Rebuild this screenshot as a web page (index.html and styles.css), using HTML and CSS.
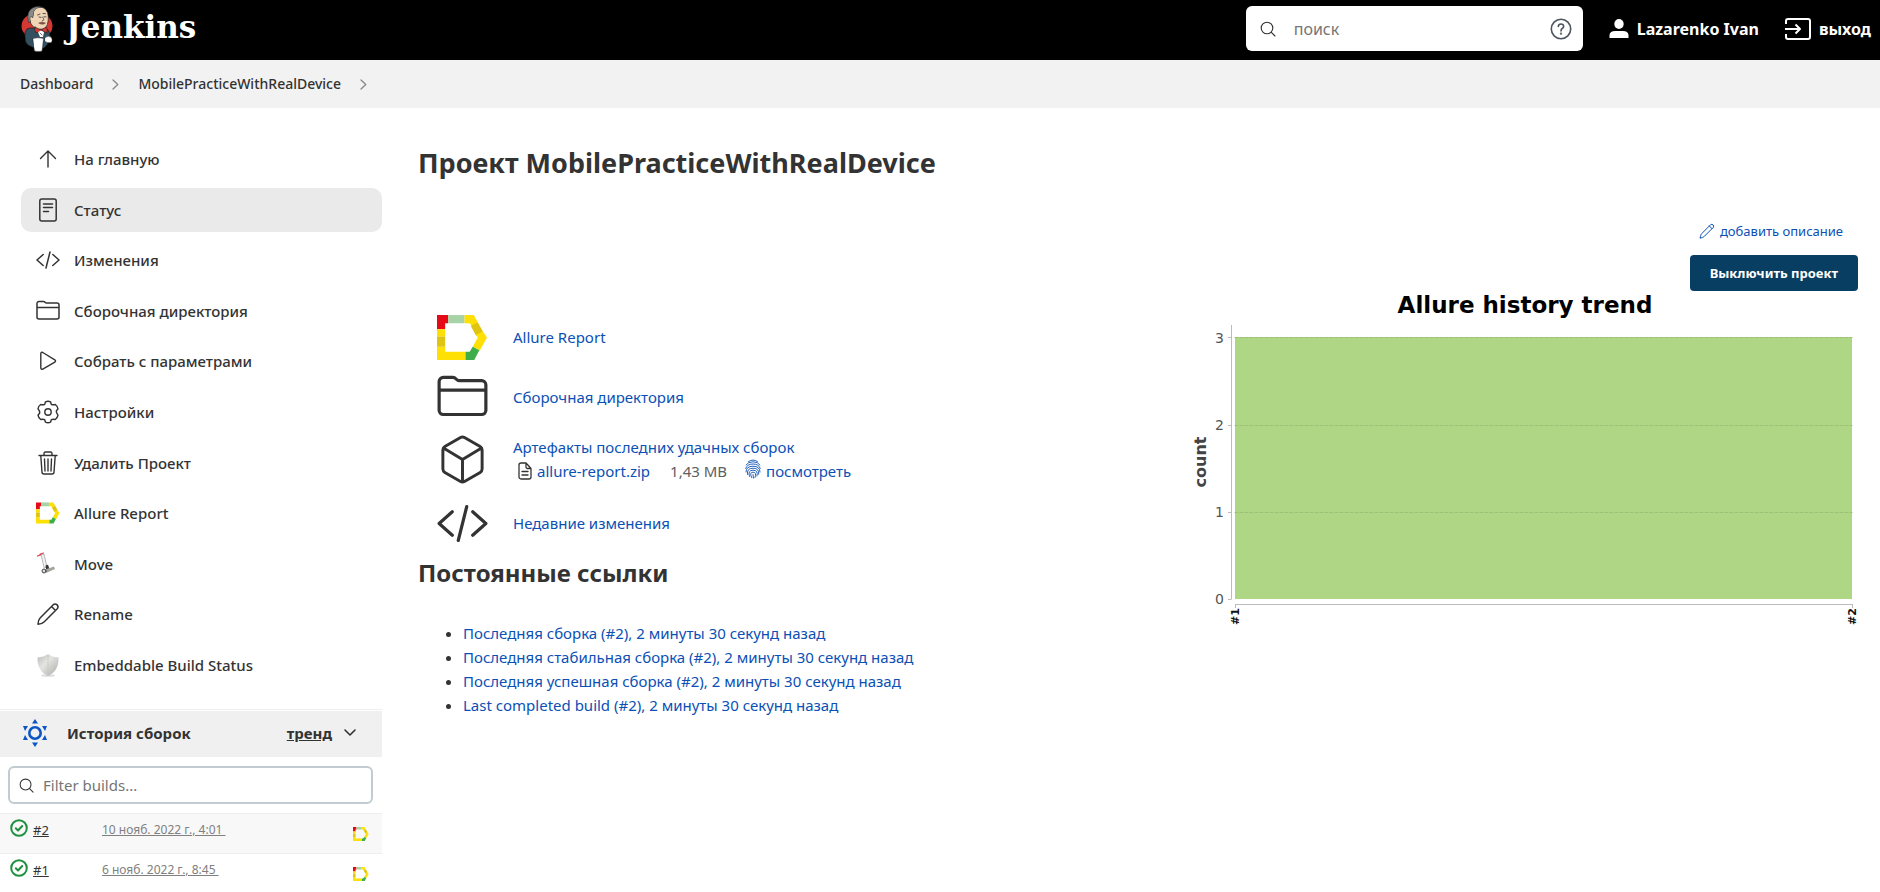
FILE: index.html
```html
<!DOCTYPE html>
<html lang="ru">
<head>
<meta charset="utf-8">
<title>MobilePracticeWithRealDevice [Jenkins]</title>
<link rel="stylesheet" href="styles.css">
</head>
<body>
<svg class="defs" aria-hidden="true">
  <defs>
    <symbol id="i-search" viewBox="0 0 24 24" stroke-width="1.7"><circle cx="10.500" cy="10.500" r="8.700"/><path d="M17 17L22.500 22.500"/></symbol>
    <symbol id="i-next" viewBox="0 0 7 11" stroke-width="1.3"><path d="M1 1l4.800 4.500L1 10"/></symbol>
    <symbol id="i-up" viewBox="0 0 24 24" stroke-width="1.400"><path d="M12 20V4.500M4.500 11.500L12 4l7.500 7.500"/></symbol>
    <symbol id="i-status" viewBox="0 0 24 24" stroke-width="1.500"><rect x="3.800" y="1" width="16.400" height="22" rx="2"/><path d="M7.500 6h9M7.500 9.500h9M7.500 13.500h5"/></symbol>
    <symbol id="i-code" viewBox="0 0 24 24" stroke-width="1.500"><path d="M7.200 6.500L1 12l6.200 5.500M16.800 6.500L23 12l-6.200 5.500M14 4l-4 16"/></symbol>
    <symbol id="i-folder" viewBox="0 0 24 24" stroke-width="1.500"><path d="M1 18V4.500a2 2 0 0 1 2-2h4.500c1.500 0 1.500 1.600 3 1.600H21a2 2 0 0 1 2 2V18a2 2 0 0 1-2 2H3a2 2 0 0 1-2-2zM1 8.500h22"/></symbol>
    <symbol id="i-play" viewBox="0 0 24 24" stroke-width="1.400"><path d="M4.800 4.600v14.400c0 1.200 1 1.600 2 1.100l12-7c1-.6 1-1.600 0-2.200l-12-7.400C5.800 3 4.800 3.400 4.800 4.600z"/></symbol>
    <symbol id="i-gear" viewBox="0 0 24 24" stroke-width="1.400"><circle cx="12" cy="12" r="3.200"/><path d="M9.500 1.800Q12 .6 14.500 1.800L15.300 4.300Q17 5.200 19.300 4.500Q21.700 6.300 22 8.800L20.300 11Q20.100 12.800 22 15.200Q21.500 18 19.300 19.500Q17 18.800 15.300 19.700L14.500 22.200Q12 23.400 9.500 22.200L8.700 19.700Q7 18.800 4.700 19.500Q2.400 17.800 2 15.200L3.700 13Q3.900 11.200 2 8.800Q2.400 6 4.700 4.500Q7 5.200 8.700 4.300Z"/></symbol>
    <symbol id="i-trash" viewBox="0 0 24 24" stroke-width="1.400"><path d="M3 4.500h18M8 4V2.500A1.500 1.500 0 0 1 9.500 1h5A1.500 1.500 0 0 1 16 2.500V4M4.800 5l1.200 16a2 2 0 0 0 2 2h8a2 2 0 0 0 2-2l1.200-16M8.500 8l.5 12M12 8v12M15.500 8L15 20"/></symbol>
    <symbol id="i-pencil" viewBox="0 0 24 24" stroke-width="1.500"><path d="M2 22.300c0-3 1-5.300 2.300-6.600L17.500 2.500a2.900 2.900 0 0 1 4 4L8.300 19.700C7 21 4.500 22.300 2 22.300zM15.500 4.500l4 4"/></symbol>
    <symbol id="i-cube" viewBox="-2 -2 52 52" stroke-width="3"><path d="M26 1.600l16 9.200q2 1.200 2 3.400v19.600q0 2.200-2 3.400l-16 9.200q-2 1.100-4 0L6 37.200q-2-1.200-2-3.400V14.200q0-2.200 2-3.400l16-9.200q2-1.100 4 0zM5 12.500L24 24l19-11.500M24 24v22"/></symbol>
    <symbol id="i-doc" viewBox="0 0 14 18" stroke-width="1.300"><path d="M3 1h5l5 5.500V15a2 2 0 0 1-2 2H3a2 2 0 0 1-2-2V3a2 2 0 0 1 2-2zM8 1v4a1.500 1.500 0 0 0 1.500 1.500H13M4 9.500h6M4 13h6"/></symbol>
    <symbol id="i-finger" viewBox="0 0 16 20" stroke-width=".9"><path d="M3.500 2.500Q8-.5 12.500 2.500M1 6Q3 2.800 8 2.800T15 6M.7 9.500Q2 5 8 5t7.300 4.500M1 13Q1 7.200 8 7.200T15 13M2.500 15.500Q1.500 9.200 8 9.200t5.700 6M4.500 17.500Q2.500 11.200 8 11.200T12 17M6.800 18.800Q4 13.200 8 13.200t2 5.300M8 15.500l.5 3.500"/></symbol>
    <symbol id="i-allure" viewBox="0 -3 50 50"><path fill="#e60a17" d="M0 0h11v8H8v6H0z"/><path fill="#a7d3a6" d="M11 0h16v8H11z"/><path fill="#ffe004" d="M27 0h9l4 7-6 3.500L32 8h-5zM0 14h8v7H0zM0 31h8v5h20v8H0zM44 15l5 7-7 12.800-7-3.800 5-9-3-4z"/><path fill="#e0c510" d="M0 21h8v10H0zM40 7l5 9-7 3.500-5-9z"/><path fill="#3dae49" d="M35 31l6.500 3.500L36.500 44H28v-8h4z"/></symbol>
    <symbol id="i-ok" viewBox="0 0 18 18"><circle cx="9" cy="9" r="7.800"/><path d="M5.800 9.300l2.200 2.200L12.200 7"/></symbol>
  </defs>
</svg>

<header class="header">
  <a class="brand" href="#" aria-label="Jenkins">
    <svg class="mascot" viewBox="0 0 32 46">
      <ellipse cx="16" cy="20" rx="15.500" ry="13" fill="#d33833"/>
      <path d="M6 23q-3 3-2 8 0 6 3 8l6 3h10l3-3q3-4 3-10-1-6-5-7H10z" fill="#335061" stroke="#111" stroke-width=".6"/>
      <path d="M8 11Q8 1 18 .8q9 .6 9.300 10.200Q27.500 20 23 23q-6 1-9-1-5-3-6-11z" fill="#f0d6b7" stroke="#222" stroke-width=".7"/>
      <path d="M7.500 16Q5 5 12 1.800 16-.5 21 1 14 1.500 12.500 6q.5 3-1 6l-1-1.500q-2.500 0-1 5z" fill="#8a8a8a" stroke="#222" stroke-width=".5"/>
      <path d="M16.500 9l2.500-1M22 7.500l2.500.2M18 11l2 .4M23 10.800l2 .1M21.500 11q3 3.500-.3 4" fill="none" stroke="#333" stroke-width=".8"/>
      <path d="M17 17q4-2 8 0-3 3-8 0z" fill="#7d5244"/>
      <path d="M14 21l6 3 5-3q2 2 1 6l-5-2.500-6 2.500q-2-3-1-6z" fill="#d33833" stroke="#111" stroke-width=".5"/>
      <path d="M17 26l3-1.500 3 1.500-1 5h-3z" fill="#fff"/><path d="M19 27l2 2" stroke="#333" stroke-width=".7"/>
      <path d="M12 32.500q5-1.500 10.500 0L21 45q-4 1-7.500 0z" fill="#fff" stroke="#222" stroke-width=".4"/>
      <path d="M24 31.500q4-2.500 6.500 0 1.500 3 0 5-4 1-6.500-1z" fill="#fff" stroke="#222" stroke-width=".5"/>
    </svg>
    <span class="brand-name">Jenkins</span>
  </a>
  <form class="search" role="search">
    <svg class="search-icon"><use href="#i-search"/></svg>
    <input class="search-input" type="search" placeholder="поиск" aria-label="поиск">
    <a class="help" href="#" aria-label="Справка"><svg class="help-icon" viewBox="0 0 22 22" stroke-width="1.600"><circle cx="11" cy="11" r="9.700"/><path d="M8.300 8.500Q8.500 6 11 6t2.700 2.300q0 1.400-1.500 2.200Q11 11.200 11 13"/><circle cx="11" cy="15.600" r=".4"/></svg></a>
  </form>
  <nav class="account">
    <a class="account-link" href="#"><svg class="user-icon" viewBox="0 0 20 20"><ellipse cx="10" cy="5" rx="4.700" ry="5"/><path d="M.5 19v-3Q1 12 6 12h8q5 0 5.500 4v3z"/></svg>Lazarenko Ivan</a>
    <a class="account-link" href="#"><svg class="exit-icon" viewBox="0 0 26 22"><path d="M1 6V3q0-2 2-2h20q2 0 2 2v16q0 2-2 2H3q-2 0-2-2v-3M0 11h14M10.500 6.500L15 11l-4.500 4.500"/></svg>выход</a>
  </nav>
</header>

<nav class="crumbs" aria-label="breadcrumb">
  <a href="#">Dashboard</a><svg class="crumb-sep"><use href="#i-next"/></svg>
  <a href="#">MobilePracticeWithRealDevice</a><svg class="crumb-sep"><use href="#i-next"/></svg>
</nav>

<div class="page">
  <aside class="side">
    <nav class="tasks">
      <a class="task" href="#"><svg class="icon"><use href="#i-up"/></svg>На главную</a>
      <a class="task task-active" href="#"><svg class="icon"><use href="#i-status"/></svg>Статус</a>
      <a class="task" href="#"><svg class="icon"><use href="#i-code"/></svg>Изменения</a>
      <a class="task" href="#"><svg class="icon"><use href="#i-folder"/></svg>Сборочная директория</a>
      <a class="task" href="#"><svg class="icon"><use href="#i-play"/></svg>Собрать с параметрами</a>
      <a class="task" href="#"><svg class="icon"><use href="#i-gear"/></svg>Настройки</a>
      <a class="task" href="#"><svg class="icon"><use href="#i-trash"/></svg>Удалить Проект</a>
      <a class="task" href="#"><svg class="icon icon-solid"><use href="#i-allure"/></svg>Allure Report</a>
      <a class="task" href="#"><svg class="icon icon-solid" viewBox="0 0 24 24"><path d="M1.500 4l3.500-1.200M4 2.300l3.500-1.200" stroke="#d8333b" stroke-width="1.100"/><path d="M5.500 2.500L8 2l3 13-2.500.8z" fill="#f2f2f2" stroke="#999" stroke-width=".7"/><path d="M8 18l10-3.500 1 2.500-9 4z" fill="#a5a59c"/><path d="M9.500 13.500l2.500-.8 1.200 3.500-3 1z" fill="#333"/><circle cx="8" cy="19" r="2" fill="#ddd" stroke="#444"/></svg>Move</a>
      <a class="task" href="#"><svg class="icon"><use href="#i-pencil"/></svg>Rename</a>
      <a class="task" href="#"><svg class="icon icon-solid" viewBox="0 0 24 24"><defs><linearGradient id="steel" x1="0" x2="1" y1="0" y2="1"><stop offset="0" stop-color="#b9bbb6"/><stop offset=".4" stop-color="#e4e5e2"/><stop offset="1" stop-color="#a9aba6"/></linearGradient></defs><ellipse cx="12" cy="22.500" rx="7" ry="1.300" fill="#ddd"/><path d="M1.500 4.500Q8 4 12 1q4 3 10.500 3.500Q23 18 12 23 1 18 1.500 4.500z" fill="url(#steel)"/><path d="M12 3v18" stroke="#bfc1bc" stroke-dasharray="1 2"/></svg>Embeddable Build Status</a>
    </nav>

    <section class="history">
      <div class="history-head">
        <svg class="sun" viewBox="0 0 24 28"><circle cx="12" cy="14" r="5.700" fill="none" stroke="#0b56c4" stroke-width="2.600"/><path d="M12 0l3 4.500H9zM12 28l3-4.500H9zM0 7h5l-3 5zM24 7h-5l3 5zM0 21h5l-3-5zM24 21h-5l3-5z" fill="#0b56c4"/></svg>
        <h2 class="history-title">История сборок</h2>
        <a class="trend" href="#">тренд</a>
        <svg class="chevron" viewBox="0 0 12 8" stroke-width="1.600"><path d="M1 1l5 5 5-5"/></svg>
      </div>
      <div class="filter">
        <svg class="filter-icon"><use href="#i-search"/></svg>
        <input class="filter-input" type="text" placeholder="Filter builds..." aria-label="Filter builds">
      </div>
      <div class="build build-odd"><svg class="ok"><use href="#i-ok"/></svg><a class="build-num" href="#">#2</a><a class="build-time" href="#">10 нояб. 2022 г., 4:01&nbsp;</a><a class="build-report" href="#" aria-label="Allure Report"><svg class="build-allure"><use href="#i-allure"/></svg></a></div>
      <div class="build"><svg class="ok"><use href="#i-ok"/></svg><a class="build-num" href="#">#1</a><a class="build-time" href="#">6 нояб. 2022 г., 8:45&nbsp;</a><a class="build-report" href="#" aria-label="Allure Report"><svg class="build-allure"><use href="#i-allure"/></svg></a></div>
    </section>
  </aside>

  <main class="main">
    <h1 class="title">Проект MobilePracticeWithRealDevice</h1>
    <div class="columns">
      <div class="content">
        <ul class="summary">
          <li class="row"><svg class="big icon-solid"><use href="#i-allure"/></svg><a href="#">Allure Report</a></li>
          <li class="row"><svg class="big"><use href="#i-folder"/></svg><a href="#">Сборочная директория</a></li>
          <li class="row row-tall"><svg class="big"><use href="#i-cube"/></svg>
            <div class="artifacts"><a href="#">Артефакты последних удачных сборок</a>
              <div class="files"><svg class="doc"><use href="#i-doc"/></svg><a href="#">allure-report.zip</a><span class="size">1,43 MB</span><svg class="finger"><use href="#i-finger"/></svg><a href="#">посмотреть</a></div>
            </div></li>
          <li class="row row-tall"><svg class="big"><use href="#i-code"/></svg><a href="#">Недавние изменения</a></li>
        </ul>
        <h2 class="subtitle">Постоянные ссылки</h2>
        <ul class="permalinks">
          <li><a href="#">Последняя сборка (#2), 2 минуты 30 секунд назад</a></li>
          <li><a href="#">Последняя стабильная сборка (#2), 2 минуты 30 секунд назад</a></li>
          <li><a href="#">Последняя успешная сборка (#2), 2 минуты 30 секунд назад</a></li>
          <li><a href="#">Last completed build (#2), 2 минуты 30 секунд назад</a></li>
        </ul>
      </div>
      <div class="aside">
        <a class="describe" href="#"><svg class="describe-icon"><use href="#i-pencil"/></svg>добавить описание</a>
        <button class="disable" type="button">Выключить проект</button>
        <svg class="chart" viewBox="0 0 680 350" role="img" aria-label="Allure history trend">
          <text class="chart-title" x="347" y="22" text-anchor="middle">Allure history trend</text>
          <path class="area" d="M57 46h617v262H57z"/>
          <path class="grid" d="M57 46.500h617M57 134.500h617M57 221.500h617"/>
          <path class="axis" d="M53.500 34v274.500M50 46.500h3M50 134.500h3M50 221.500h3M50 308.500h3M57 313.500h617.500M57.500 313v4M674.500 313v4"/>
          <g class="ticks" text-anchor="end"><text x="46" y="52">3</text><text x="46" y="139">2</text><text x="46" y="226">1</text><text x="46" y="313">0</text></g>
          <text class="axis-name" transform="translate(28 171) rotate(-90)" text-anchor="middle">count</text>
          <text class="build-tick" transform="translate(61 334) rotate(-90)">#1</text>
          <text class="build-tick" transform="translate(678 334) rotate(-90)">#2</text>
        </svg>
      </div>
    </div>
  </main>
</div>
</body>
</html>
```
FILE: styles.css
```css
* { box-sizing: border-box; }
body { margin: 0; background: #fff; color: #333; font: 15px/24px "Noto Sans", "Open Sans", sans-serif; }
a { color: #0b50b5; text-decoration: none; }
ul { margin: 0; padding: 0; list-style: none; }
h1, h2 { margin: 0; }
svg { flex: none; fill: none; stroke: #333; stroke-linecap: round; stroke-linejoin: round; }
.defs { position: absolute; width: 0; height: 0; }

.header { display: flex; align-items: center; height: 60px; padding: 0 9px 0 21px; background: #000; }
.brand { display: flex; align-items: center; gap: 13px; margin-right: auto; padding-bottom: 3px; color: #fff; }
.mascot { width: 32px; height: 46px; stroke: none; }
.brand-name { padding-bottom: 4px; font: bold 31px/36px "DejaVu Serif", serif; }
.search { display: flex; align-items: center; width: 337px; height: 45px; margin-bottom: 3px; padding: 0 11px 0 14px; border-radius: 6px; background: #fff; }
.search-icon { width: 16px; height: 16px; }
.search-input { flex: 1; min-width: 0; padding: 0 0 0 18px; border: 0; outline: 0; background: none; font: 16px/24px "Noto Sans", sans-serif; }
input::placeholder { color: #757575; opacity: 1; }
.help { display: flex; }
.help-icon { width: 22px; height: 22px; stroke: #4d545d; }
.account { display: flex; gap: 26px; margin: 0 0 3px 26px; }
.account-link { display: flex; align-items: center; gap: 8px; color: #fff; font: bold 16px/24px "Noto Sans", sans-serif; }
.user-icon { width: 20px; height: 20px; fill: #fff; stroke: none; }
.exit-icon { width: 26px; height: 22px; stroke: #fff; stroke-width: 2px; stroke-linecap: butt; }

.crumbs { display: flex; align-items: center; height: 48px; padding: 0 20px; background: #f2f2f2; font-size: 14px; font-weight: 500; }
.crumbs a { color: #333; }
.crumb-sep { width: 7px; height: 11px; margin: 0 19px; stroke: #888; }

.page { display: flex; }
.side { flex: none; width: 382px; }
.tasks { display: flex; flex-direction: column; justify-content: space-between; min-height: 579px; padding: 29px 0 0 21px; }
.task { display: flex; align-items: center; gap: 14px; height: 44px; padding: 0 15px; border-radius: 10px; color: #333; font-weight: 500; }
.task-active { background: #eaeaea; }
.icon { width: 24px; height: 24px; }
.icon-solid { stroke: none; }

.history { margin-top: 22px; border-top: 1px solid #eee; }
.history-head { display: flex; align-items: center; height: 46px; margin-top: 1px; padding: 0 26px 2px 23px; background: #f0f0f0; }
.sun { width: 24px; height: 28px; margin-right: 20px; stroke: none; }
.history-title { margin-right: auto; font-size: 15px; }
.trend { color: #333; font-weight: bold; text-decoration: underline; }
.chevron { width: 12px; height: 8px; margin-left: 12px; }
.filter { display: flex; align-items: center; gap: 9px; height: 38px; margin: 9px 9px 9px 8px; padding: 0 9px; border: 2px solid #c1cbd0; border-radius: 6px; }
.filter-icon { width: 15px; height: 15px; }
.filter-input { flex: 1; min-width: 0; padding: 0; border: 0; outline: 0; font: 15px/24px "Noto Sans", sans-serif; }
.build { display: flex; height: 40px; padding: 5px 13px 5px 10px; border-top: 1px solid #eee; font-size: 13px; line-height: 22px; }
.build-odd { background: #f8f8f8; }
.ok { width: 18px; height: 18px; margin-right: 5px; stroke: #1e9040; stroke-width: 2px; }
.build-num { width: 69px; color: #333; text-decoration: underline; }
.build-time { margin-right: auto; color: #808080; font-size: 12px; text-decoration: underline; }
.build-report { display: flex; align-items: center; }
.build-allure { width: 16px; height: 16px; stroke: none; }

.main { flex: 1; min-width: 0; padding: 36px 22px 0 36px; }
.title { font-size: 27px; line-height: 38px; }
.columns { display: flex; justify-content: space-between; padding-top: 36px; }
.content { padding-top: 89px; }
.row { display: flex; align-items: center; gap: 25px; min-height: 60px; padding-left: 19px; }
.row-tall { min-height: 64px; }
.big { width: 51px; height: 51px; }
.files { display: flex; align-items: center; }
.doc { width: 14px; height: 18px; margin: 0 5px; }
.size { margin: 0 18px 0 20px; color: #606060; }
.finger { width: 16px; height: 20px; margin: 0 5px 4px 0; stroke: #0b50b5; }
.subtitle { font-size: 24px; line-height: 36px; }
.permalinks { margin-top: 30px; padding-left: 45px; list-style: disc; }
.aside { display: flex; flex: 0 1 680px; flex-direction: column; align-items: flex-end; }
.describe { display: flex; align-items: center; gap: 5px; margin: 1px 15px 12px 0; font-size: 13px; }
.describe-icon { width: 16px; height: 16px; stroke: #0b50b5; }
.disable { height: 36px; padding: 0 20px; border: 0; border-radius: 4px; background: #073e62; color: #fff; font: bold 13px/20px "Noto Sans", sans-serif; }
.chart { width: 100%; stroke: none; font-family: "DejaVu Sans", sans-serif; }
.chart-title { fill: #000; font-size: 23px; font-weight: bold; }
.area { fill: #aed685; }
.grid { stroke: #9dc077; stroke-dasharray: 3 2; }
.axis { stroke: #bbb; stroke-linecap: butt; }
.ticks { fill: #555; font-size: 14px; }
.axis-name { fill: #444; font-size: 16px; font-weight: bold; }
.build-tick { fill: #111; font-size: 11px; font-weight: bold; }
```
